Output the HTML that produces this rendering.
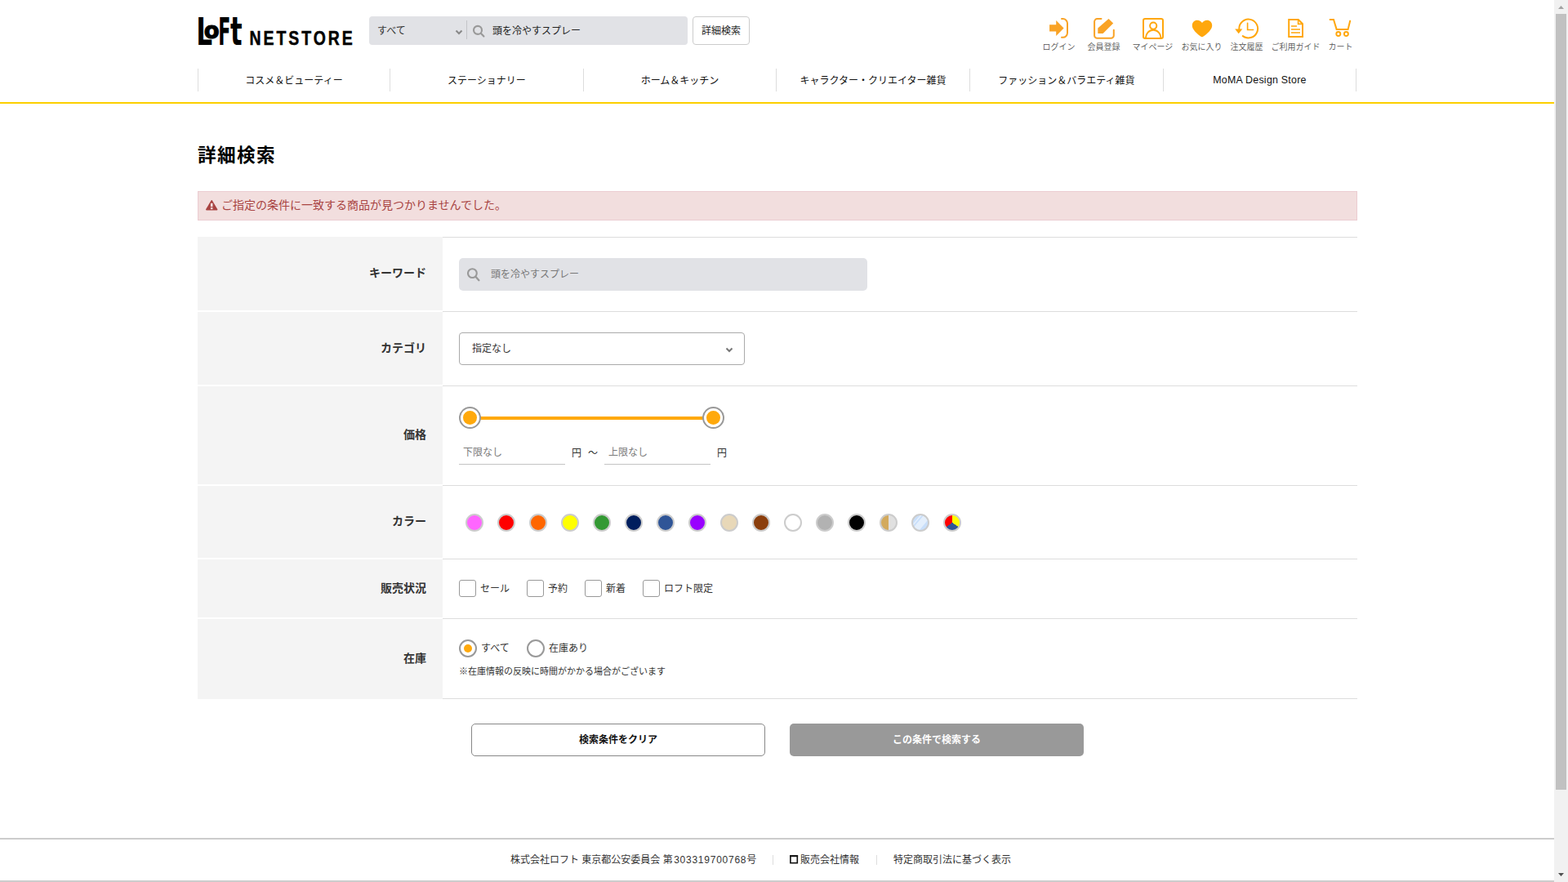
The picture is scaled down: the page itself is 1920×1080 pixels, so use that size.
<!DOCTYPE html>
<html lang="ja">
<head>
<meta charset="utf-8">
<title>詳細検索 | ロフトネットストア</title>
<style>
*{box-sizing:border-box;margin:0;padding:0}
html,body{width:1920px;height:1080px;overflow:hidden;background:#fff}
body{font-family:"Liberation Sans","Noto Sans CJK JP",sans-serif;font-size:12px;color:#333;line-height:1;position:relative}
a{color:inherit;text-decoration:none}
ul{list-style:none}
.page{position:absolute;left:0;top:0;width:1903px;height:1080px;overflow:hidden;background:#fff}
.abs{position:absolute}
/* header */
.logo{position:absolute;left:242px;top:20px;width:192px;height:38px}
.logo svg{display:block}
.hsearch{position:absolute;left:452px;top:20px;width:390px;height:35px;background:#e1e2e6;border-radius:4px}
.hsearch .sel{position:absolute;left:10px;top:1px;height:35px;line-height:34px;font-size:12px;color:#333}
.hsearch .chev{position:absolute;left:105px;top:16px}
.hsearch .sep{position:absolute;left:119px;top:5px;width:1px;height:23px;background:#c4c5c9}
.hsearch .mag{position:absolute;left:126px;top:10px}
.hsearch .q{position:absolute;left:151px;top:1px;height:35px;line-height:34px;font-size:12px;color:#222}
.hbtn{position:absolute;left:848px;top:20px;width:70px;height:35px;border:1px solid #ccc;border-radius:4px;background:#fff;text-align:center;line-height:35px;font-size:12px;color:#222}
.hicons li{position:absolute;top:21px;height:44px;font-size:10px;color:#666;white-space:nowrap}
.hicons li svg{position:absolute;top:0;display:block}
.hicons li span{position:absolute;left:-.6px;top:31px;line-height:12px;font-weight:350;color:#555}
.en{font-size:12.4px;letter-spacing:.25px;position:relative;top:-1px}
/* nav */
.gnav{position:absolute;left:242px;top:84px;width:1420px;height:28px}
.gnav li{position:absolute;top:0;height:28px;border-left:1px solid #ddd;text-align:center;line-height:31px;font-size:12px;color:#111}
.gnav li:last-child{border-right:1px solid #ddd;width:238px}
.yline{position:absolute;left:0;top:125px;width:1903px;height:2px;background:#fccf00}
/* main */
h1{position:absolute;left:242px;top:177px;font-size:22.6px;letter-spacing:1.4px;line-height:28px;font-weight:bold;color:#000;white-space:nowrap}
.alert{position:absolute;left:242px;top:234px;width:1420px;height:36px;background:#f2dede;border:1px solid #ebccd1;color:#a94442;font-size:14px;line-height:32px;padding-left:28px}
.alert svg{position:absolute;left:8px;top:9px}
.form{position:absolute;left:242px;top:290px;width:1420px}
.row{position:relative;width:1420px}
.row .th{position:absolute;left:0;top:0;bottom:2px;width:300px;background:#f4f4f4;font-weight:bold;font-size:14px;color:#333;text-align:right;padding-right:20px;padding-bottom:2px;display:flex;align-items:center;justify-content:flex-end}
.row .td{position:absolute;left:300px;top:0;right:0;bottom:0;border-bottom:1px solid #ddd}
.row:first-child .td{border-top:1px solid #ddd}
.row:last-child .th{bottom:0}
.kw{position:absolute;left:20px;width:500px;height:40px;background:#e1e2e6;border-radius:5px;font-size:12px;color:#777;line-height:41px;padding-left:39px}
.kw svg{position:absolute;left:10px;top:12px}
.select{position:absolute;left:20px;width:350px;height:40px;border:1px solid #aaa;border-radius:4px;background:#fff;font-size:12px;color:#333;line-height:38px;padding-left:15px}
.select svg{position:absolute;right:13px;top:17px}
.btn{position:absolute;top:886px;width:360px;height:40px;border-radius:5px;text-align:center;line-height:38px;font-size:12px;font-weight:bold}
.btn.clear{left:577px;border:1px solid #888;background:#fff;color:#111}
.btn.go{left:967px;background:#999;color:#fff;line-height:40px}

.slider{position:absolute;left:20px;top:25px;width:325px;height:27px}
.slider .track{position:absolute;left:13px;top:12px;width:299px;height:4px;background:#ffa90c}
.slider .hd{position:absolute;top:0;width:27px;height:27px;border-radius:50%;border:2px solid #999;background:#fff}
.slider .hd b{position:absolute;left:3px;top:3px;width:17px;height:17px;border-radius:50%;background:#ffa90c}
.pin{position:absolute;top:65px;width:130px;height:31px;border-bottom:1px solid #c4c4c4;font-size:12px;color:#7b7b7b;line-height:32px;padding-left:5px}
.yen{position:absolute;top:65px;line-height:34px;font-size:12px;color:#333}
.colors li{position:absolute;top:34px;width:22px;height:22px;border-radius:50%;border:2px solid #ccc}
.ck{position:absolute;top:25px;height:21px;line-height:23px;font-size:12px;color:#333;padding-left:26px;white-space:nowrap}
.ck i{position:absolute;left:0;top:0;width:21px;height:21px;border:1px solid #999;border-radius:3px;background:#fff}
.rd{position:absolute;top:25px;height:22px;line-height:22px;font-size:12px;color:#333;padding-left:27px;white-space:nowrap}
.rd i{position:absolute;left:0;top:0;width:22px;height:22px;border:2px solid #999;border-radius:50%;background:#fff}
.rd i b{position:absolute;left:4px;top:4px;width:10px;height:10px;border-radius:50%;background:#ffa90c}
.note{position:absolute;left:20px;top:57px;font-size:11px;line-height:14px;color:#333;white-space:nowrap}
/* footer */
.fline{position:absolute;left:0;top:1026px;width:1903px;height:2px;background:#ccc}
.fline2{position:absolute;left:0;top:1078px;width:1903px;height:2px;background:#ccc}
.foot{position:absolute;left:0;top:1045px;width:1903px;height:16px;font-size:12px;line-height:16px;color:#333}
.foot>span{position:absolute;top:0;white-space:nowrap}
.foot .num{letter-spacing:.75px;margin-left:1.5px}
.foot .fsep{position:absolute;top:2px;width:1px;height:12px;background:#ddd}
.foot .fico{position:absolute;left:967px;top:2px}
/* scrollbar */
.sb{position:absolute;left:1903px;top:0;width:17px;height:1080px;background:#f1f1f1}
.sb .thumb{position:absolute;left:2px;top:17px;width:13px;height:950px;background:#c1c1c1}
.sb svg{position:absolute;left:0}
</style>
</head>
<body>
<div class="page">
<header>
  <a class="logo" href="#">
    <svg width="192" height="38" viewBox="0 0 192 38" font-weight="bold" fill="#000"><g font-family="DejaVu Sans"><text transform="translate(-1.86 35) scale(.667 1)" font-size="46.6">L</text><text transform="translate(7.75 26.9) scale(.96 1)" font-size="28.6" stroke="#000" stroke-width="1.1">o</text><text transform="translate(25.37 35) scale(.474 1)" font-size="46.6">F</text><text transform="translate(40.1 35) scale(.631 1)" font-size="48.4">t</text></g><text transform="translate(63.6 34.75) scale(.8 1)" font-family="Liberation Sans" font-size="24.3" letter-spacing="3.67" stroke="#000" stroke-width=".5">NETSTORE</text></svg>
  </a>
  <div class="hsearch">
    <span class="sel">すべて</span>
    <svg class="chev" width="10" height="7" viewBox="0 0 10 7"><path d="M1.5 1.5 L5 5 L8.5 1.5" fill="none" stroke="#888" stroke-width="2"/></svg>
    <i class="sep"></i>
    <svg class="mag" width="17" height="17" viewBox="0 0 17 17"><circle cx="7" cy="6.9" r="5" fill="none" stroke="#999" stroke-width="2.1"/><path d="M10.8 10.8 L14.4 14.5" stroke="#999" stroke-width="2.2" stroke-linecap="round"/></svg>
    <span class="q">頭を冷やすスプレー</span>
  </div>
  <a class="hbtn" href="#">詳細検索</a>
  <ul class="hicons">
    <li style="left:1277px;width:40px"><svg style="left:6px" width="28" height="28" viewBox="1283 21 28 28"><path d="M1285.1 30.3 H1293.2 V25.1 L1302.6 34.45 L1293.2 43.9 V38.6 H1285.1 Z" fill="#f9a326"/><path d="M1300 23.1 H1301.5 A5.5 5.5 0 0 1 1307 28.6 V40.3 A5.5 5.5 0 0 1 1301.5 45.8 H1300" fill="none" stroke="#f9a326" stroke-width="2" stroke-linecap="round"/></svg><span>ログイン</span></li>
    <li style="left:1332px;width:40px"><svg style="left:6px" width="28" height="28" viewBox="1338 21 28 28"><path d="M1348.5 23.1 H1343.5 A3.4 3.4 0 0 0 1340.1 26.5 V43.4 A3.4 3.4 0 0 0 1343.5 46.8 H1360.4 A3.4 3.4 0 0 0 1363.8 43.4 V36.8" fill="none" stroke="#f9a326" stroke-width="2" stroke-linecap="round"/><path d="M1357.5 23 L1363.2 28.6 L1350.6 40.9 H1344.3 V34.6 Z" fill="#f9a326"/></svg><span>会員登録</span></li>
    <li style="left:1387px;width:50px"><svg style="left:11px" width="28" height="28" viewBox="1398 21 28 28"><rect x="1400" y="23" width="24" height="24" rx="2.2" fill="none" stroke="#ffa70d" stroke-width="2"/><circle cx="1412.2" cy="31.6" r="4.1" fill="none" stroke="#ffa70d" stroke-width="2"/><path d="M1402.9 46.5 A9.3 9.8 0 0 1 1421.5 46.5" fill="none" stroke="#ffa70d" stroke-width="2"/></svg><span>マイページ</span></li>
    <li style="left:1447px;width:50px"><svg style="left:11px" width="28" height="28" viewBox="1458 21 28 28"><path d="M1472 45.2 C1470.5 45.2 1459.8 37.5 1459.8 31.2 C1459.8 27.4 1462.6 24.8 1466 24.8 C1468.6 24.8 1470.8 26.2 1472 28 C1473.2 26.2 1475.4 24.8 1478 24.8 C1481.4 24.8 1484.2 27.4 1484.2 31.2 C1484.2 37.5 1473.5 45.2 1472 45.2 Z" fill="#ffa70d"/></svg><span>お気に入り</span></li>
    <li style="left:1507px;width:40px"><svg style="left:4px" width="32" height="28" viewBox="1511 21 32 28"><path d="M1517.3 35.2 A11.4 11.4 0 1 1 1521.8 44.1" fill="none" stroke="#ffa70d" stroke-width="2" stroke-linecap="round"/><path d="M1512.2 35.5 H1521.3 L1516.7 41.2 Z" fill="#ffa70d"/><path d="M1527.6 28.2 V36.5 H1534.6" fill="none" stroke="#ffa70d" stroke-width="1.6" stroke-linecap="round"/></svg><span>注文履歴</span></li>
    <li style="left:1557px;width:60px"><svg style="left:16px" width="28" height="28" viewBox="1573 21 28 28"><path d="M1578.2 24 H1589.8 L1595 29.2 V45 H1578.2 Z" fill="none" stroke="#ffa70d" stroke-width="2" stroke-linejoin="miter"/><path d="M1589.6 24.4 V29.4 H1594.8" fill="none" stroke="#ffa70d" stroke-width="1.6"/><path d="M1581 32 H1588 M1581 36 H1592 M1581 40 H1592" fill="none" stroke="#ffa70d" stroke-width="1.7"/></svg><span>ご利用ガイド</span></li>
    <li style="left:1627px;width:30px"><svg style="left:0px" width="30" height="28" viewBox="1627 21 30 28"><path d="M1628.6 24 H1633 L1636.6 35.9 H1650.6 L1653.2 25.6" fill="none" stroke="#ffa70d" stroke-width="2" stroke-linecap="round" stroke-linejoin="miter"/><circle cx="1638.8" cy="41.5" r="2.5" fill="none" stroke="#ffa70d" stroke-width="1.9"/><circle cx="1648.4" cy="41.5" r="2.5" fill="none" stroke="#ffa70d" stroke-width="1.9"/></svg><span>カート</span></li>
  </ul>
  <ul class="gnav">
    <li style="left:0px;width:235px">コスメ＆ビューティー</li>
    <li style="left:235px;width:237px">ステーショナリー</li>
    <li style="left:472px;width:236px">ホーム＆キッチン</li>
    <li style="left:708px;width:237px">キャラクター・クリエイター雑貨</li>
    <li style="left:945px;width:237px">ファッション＆バラエティ雑貨</li>
    <li style="left:1182px;width:237px"><span class="en">MoMA Design Store</span></li>
  </ul>
  <div class="yline"></div>
</header>
<main>
  <h1>詳細検索</h1>
  <div class="alert"><svg width="16" height="15" viewBox="0 0 16 15"><path d="M8.2 1.8 L14.6 12.6 L1.8 12.6 Z" fill="#a94442" stroke="#a94442" stroke-width="1.6" stroke-linejoin="round"/><rect x="6.9" y="4.8" width="2.6" height="4.4" fill="#f2dede"/><rect x="6.9" y="10.2" width="2.6" height="2" fill="#f2dede"/></svg>ご指定の条件に一致する商品が見つかりませんでした。</div>
  <div class="form">
    <div class="row" style="height:92px"><div class="th">キーワード</div><div class="td"><div class="kw" style="top:25px"><svg width="17" height="18" viewBox="0 0 17 18"><circle cx="6.4" cy="6.6" r="5.4" fill="none" stroke="#999" stroke-width="2.1"/><path d="M10.4 10.8 L14.4 15.2" stroke="#999" stroke-width="2.3" stroke-linecap="round"/></svg>頭を冷やすスプレー</div></div></div>
    <div class="row" style="height:91px"><div class="th">カテゴリ</div><div class="td"><div class="select" style="top:25px">指定なし<svg width="10" height="7" viewBox="0 0 10 7"><path d="M1.5 1.5 L5 5 L8.5 1.5" fill="none" stroke="#777" stroke-width="2"/></svg></div></div></div>
    <div class="row" style="height:122px"><div class="th">価格</div><div class="td"><div class="slider"><i class="track"></i><i class="hd" style="left:0"><b></b></i><i class="hd" style="left:298px"><b></b></i></div><div class="pin" style="left:20px">下限なし</div><span class="yen" style="left:158px">円</span><span class="yen" style="left:178px">～</span><div class="pin" style="left:198px">上限なし</div><span class="yen" style="left:336px">円</span></div></div>
    <div class="row" style="height:90px"><div class="th">カラー</div><div class="td"><ul class="colors"><li style="left:28px;background:#ff66ff"></li><li style="left:67px;background:#ff0000"></li><li style="left:106px;background:#ff6600"></li><li style="left:145px;background:#ffff00"></li><li style="left:184px;background:#339933"></li><li style="left:223px;background:#001e5e"></li><li style="left:262px;background:#2f5597"></li><li style="left:301px;background:#9900ff"></li><li style="left:340px;background:#e8d8b8"></li><li style="left:379px;background:#8b3e0c"></li><li style="left:418px;background:#ffffff"></li><li style="left:457px;background:#b2b2b2"></li><li style="left:496px;background:#000000"></li><li style="left:535px;background:linear-gradient(90deg,#d3aa5d 0,#d3aa5d 49%,#e0e0e0 51%,#e0e0e0 100%)"></li><li style="left:574px;background:linear-gradient(130deg,#c9dffa 0,#c9dffa 25%,#e4effc 28%,#e4effc 31%,#c9dffa 34%,#c9dffa 38%,#e4effc 41%,#e4effc 68%,#c9dffa 71%,#c9dffa 100%)"></li><li style="left:613px;background:conic-gradient(#ffff00 0deg,#ffff00 122deg,#2f5597 126deg,#2f5597 232deg,#ff0000 236deg,#ff0000 358deg,#ffff00 360deg)"></li></ul></div></div>
    <div class="row" style="height:73px"><div class="th">販売状況</div><div class="td"><label class="ck" style="left:20px"><i></i>セール</label><label class="ck" style="left:103px"><i></i>予約</label><label class="ck" style="left:174px"><i></i>新着</label><label class="ck" style="left:245px"><i></i>ロフト限定</label></div></div>
    <div class="row" style="height:98px"><div class="th">在庫</div><div class="td"><label class="rd on" style="left:20px"><i><b></b></i>すべて</label><label class="rd" style="left:103px"><i></i>在庫あり</label><p class="note">※在庫情報の反映に時間がかかる場合がございます</p></div></div>
  </div>
  <a class="btn clear" href="#">検索条件をクリア</a>
  <a class="btn go" href="#">この条件で検索する</a>
</main>
<footer>
  <div class="fline"></div>
  <div class="foot">
    <span style="left:625px">株式会社ロフト 東京都公安委員会 第<span class="num">303319700768</span>号</span>
    <i class="fsep" style="left:946px"></i>
    <svg class="fico" width="11" height="11" viewBox="0 0 11 11"><rect x="0.9" y="1.1" width="8.4" height="8.6" fill="none" stroke="#111" stroke-width="1.6"/><rect x="0.1" y="0.2" width="10" height="2" fill="#111"/></svg>
    <span style="left:980px">販売会社情報</span>
    <i class="fsep" style="left:1073px"></i>
    <span style="left:1094px">特定商取引法に基づく表示</span>
  </div>
  <div class="fline2"></div>
</footer>
</div>
<div class="sb">
  <svg style="top:0" width="17" height="17" viewBox="0 0 17 17"><path d="M5 11 L8.5 7 L12 11 Z" fill="#a3a3a3"/></svg>
  <div class="thumb"></div>
  <svg style="top:1063px" width="17" height="17" viewBox="0 0 17 17"><path d="M5 6 L8.5 10 L12 6 Z" fill="#505050"/></svg>
</div>
</body>
</html>
